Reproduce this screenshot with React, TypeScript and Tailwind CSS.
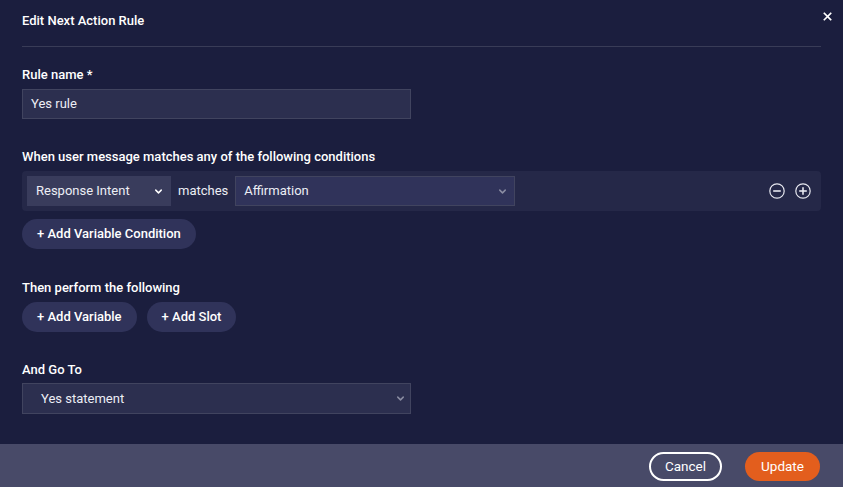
import React from "react";

const Chevron = ({ className }: { className?: string }) => (
  <svg viewBox="0 0 12 12" className={className} fill="none" stroke="currentColor" strokeWidth="1.6" strokeLinecap="round" strokeLinejoin="round">
    <path d="M3 4.5 6 7.5 9 4.5" />
  </svg>
);

const CircleIcon = ({ plus }: { plus?: boolean }) => (
  <svg viewBox="0 0 16 16" className="w-[16px] h-[16px] text-[#e6e7ef]" fill="none" stroke="currentColor" strokeWidth="1.2">
    <circle cx="8" cy="8" r="7.2" />
    <path d="M4.2 8h7.6" strokeWidth="1.6" />
    {plus && <path d="M8 4.2v7.6" strokeWidth="1.6" />}
  </svg>
);

const PillButton = ({ children }: { children: React.ReactNode }) => (
  <button className="h-[30px] rounded-full bg-[#30335a] text-white text-[13px] font-medium px-[15px]">
    {children}
  </button>
);

export default function App() {
  return (
    <div
      className="w-[843px] h-[487px] bg-[#1b1e3e] flex flex-col text-white"
      style={{ fontFamily: "Roboto, 'Liberation Sans', sans-serif" }}
    >
      <div className="flex-1 px-[22px] relative">
        <button className="absolute right-[10px] top-[10px] w-[12px] h-[12px] flex items-center justify-center">
          <svg viewBox="0 0 10 10" className="w-[9px] h-[9px]" stroke="white" strokeWidth="1.8" strokeLinecap="square">
            <path d="M1.5 1.5 8.5 8.5M8.5 1.5 1.5 8.5" />
          </svg>
        </button>
        <div className="pt-[13px] text-[13px] leading-[16px] font-medium">Edit Next Action Rule</div>
        <div className="mt-[17px] h-px bg-[#393c57]" />

        <div className="mt-[20px] text-[13px] leading-[16px] font-medium">Rule name *</div>
        <div className="mt-[6px] w-[389px] h-[30px] bg-[#2c2f4f] border border-[#41445f] flex items-center px-[8px] text-[13px] text-[#eceef5]">
          Yes rule
        </div>

        <div className="mt-[30px] text-[13px] leading-[16px] font-medium">When user message matches any of the following conditions</div>
        <div className="mt-[6px] h-[40px] rounded-[4px] bg-[#252848] flex items-center pl-[5px] pr-[10px]">
          <div className="w-[144px] h-[30px] bg-[#393c5c] flex items-center justify-between pl-[9px] pr-[7px] text-[13px] text-[#eceef5]">
            <span>Response Intent</span>
            <Chevron className="w-[11px] h-[11px] text-white" />
          </div>
          <span className="ml-[7px] text-[13px] text-[#eceef5]">matches</span>
          <div className="ml-[7px] w-[280px] h-[30px] bg-[#30335a] border border-[#41445f] flex items-center justify-between pl-[8px] pr-[6px] text-[13px] text-[#eceef5]">
            <span>Affirmation</span>
            <Chevron className="w-[11px] h-[11px] text-[#8b8da3]" />
          </div>
          <div className="ml-auto flex items-center gap-[10px]">
            <CircleIcon />
            <CircleIcon plus />
          </div>
        </div>
        <div className="mt-[8px]">
          <PillButton>+ Add Variable Condition</PillButton>
        </div>

        <div className="mt-[31px] text-[13px] leading-[16px] font-medium">Then perform the following</div>
        <div className="mt-[6px] flex gap-[10px]">
          <PillButton>+ Add Variable</PillButton>
          <PillButton>+ Add Slot</PillButton>
        </div>

        <div className="mt-[30px] text-[13px] leading-[16px] font-medium">And Go To</div>
        <div className="mt-[5px] w-[389px] h-[31px] bg-[#2c2f4f] border border-[#41445f] flex items-center justify-between pl-[18px] pr-[4px] text-[13px] text-[#eceef5]">
          <span>Yes statement</span>
          <Chevron className="w-[11px] h-[11px] text-[#8b8da3]" />
        </div>
      </div>

      <div className="h-[43px] bg-[#484a68] flex items-center justify-end gap-[23px] pr-[23px] pt-[1px]">
        <button className="h-[29px] w-[73px] rounded-full border-2 border-white text-white text-[13.5px]">Cancel</button>
        <button className="h-[29px] w-[75px] rounded-full bg-[#e35e1d] text-white text-[13.5px]">Update</button>
      </div>
    </div>
  );
}
